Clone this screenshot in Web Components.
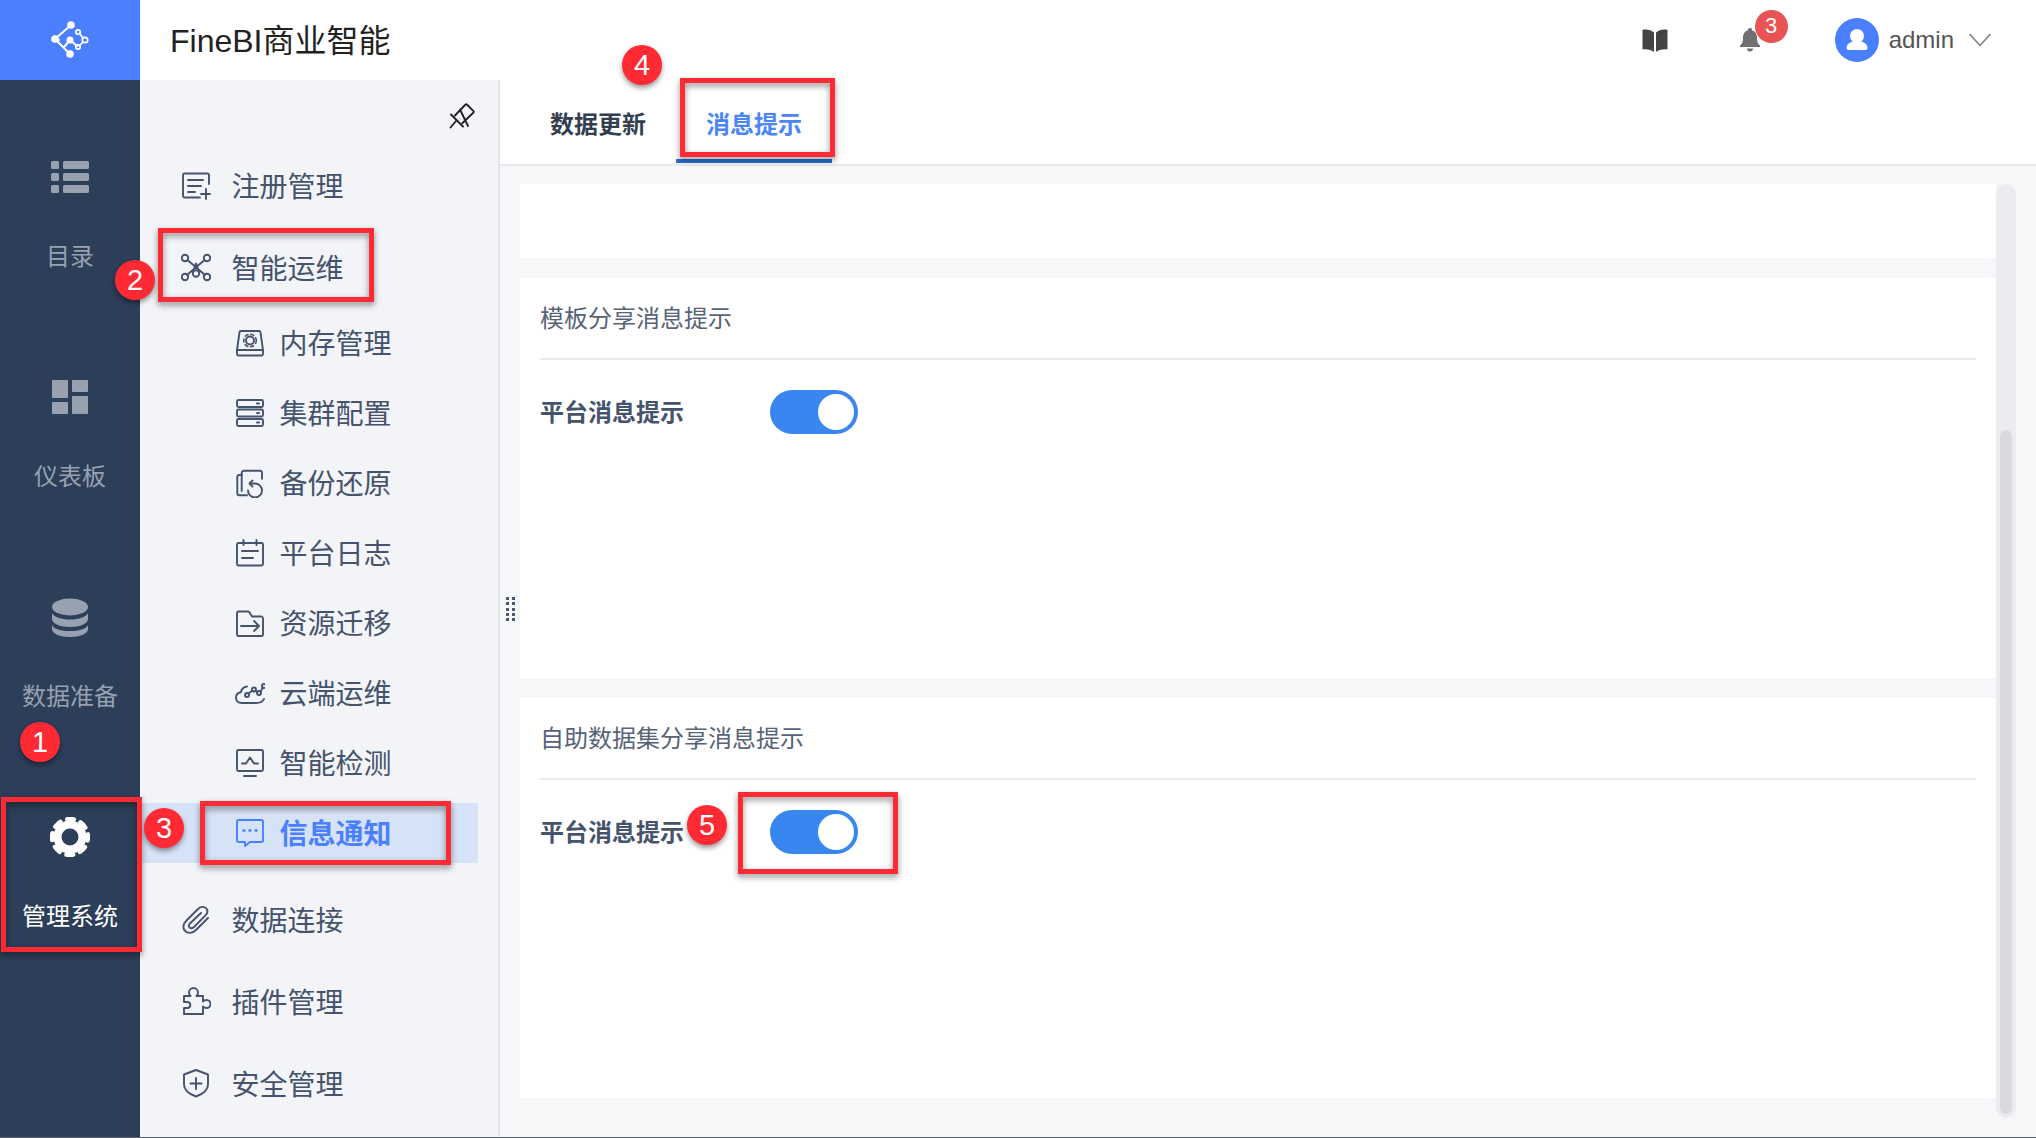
<!DOCTYPE html>
<html lang="zh-CN">
<head>
<meta charset="utf-8">
<title>FineBI</title>
<style>
    html, body { margin: 0; padding: 0; background: #fff; }
    body { font-family: "Liberation Sans", "Noto Sans CJK SC", sans-serif; }
</style>
</head>
<body>
<fb-app>
    <fb-rail slot="rail">
        <fb-rail-item icon="list">目录</fb-rail-item>
        <fb-rail-item icon="board">仪表板</fb-rail-item>
        <fb-rail-item icon="db">数据准备</fb-rail-item>
        <fb-rail-item icon="gear" active>管理系统</fb-rail-item>
    </fb-rail>
    <fb-topbar slot="top"></fb-topbar>
    <fb-sidebar slot="side">
        <fb-nav-item icon="register">注册管理</fb-nav-item>
        <fb-nav-item icon="ops">智能运维</fb-nav-item>
        <fb-nav-item icon="memory" child>内存管理</fb-nav-item>
        <fb-nav-item icon="cluster" child>集群配置</fb-nav-item>
        <fb-nav-item icon="backup" child>备份还原</fb-nav-item>
        <fb-nav-item icon="log" child>平台日志</fb-nav-item>
        <fb-nav-item icon="folder" child>资源迁移</fb-nav-item>
        <fb-nav-item icon="cloud" child>云端运维</fb-nav-item>
        <fb-nav-item icon="monitor" child>智能检测</fb-nav-item>
        <fb-nav-item icon="chat" child active>信息通知</fb-nav-item>
        <fb-nav-item icon="clip" class="after">数据连接</fb-nav-item>
        <fb-nav-item icon="puzzle">插件管理</fb-nav-item>
        <fb-nav-item icon="shield">安全管理</fb-nav-item>
    </fb-sidebar>
    <fb-main slot="main">
        <fb-card size="74"></fb-card>
        <fb-card title="模板分享消息提示" label="平台消息提示"></fb-card>
        <fb-card title="自助数据集分享消息提示" label="平台消息提示"></fb-card>
    </fb-main>

    <fb-mark slot="over" box="1 797 141 155"></fb-mark>
    <fb-mark slot="over" box="158 228 216 74"></fb-mark>
    <fb-mark slot="over" box="200 801 251 64"></fb-mark>
    <fb-mark slot="over" box="680 78 155 79"></fb-mark>
    <fb-mark slot="over" box="738 792 160 82"></fb-mark>
    <fb-badge slot="over" at="40 742">1</fb-badge>
    <fb-badge slot="over" at="135 280">2</fb-badge>
    <fb-badge slot="over" at="164 828">3</fb-badge>
    <fb-badge slot="over" at="642 65">4</fb-badge>
    <fb-badge slot="over" at="707 825">5</fb-badge>
</fb-app>

<script>
// icon shapes, each drawn on a box of its "size" (30 by default)
const ICONS = {
    register: `<path d="M28 14V5a1.5 1.5 0 0 0-1.5-1.5h-23A1.5 1.5 0 0 0 2 5v21a1.5 1.5 0 0 0 1.5 1.5H19"/><path d="M7 10h15M7 16h13M7 22h7M25 19v10M20 24h9"/>`,
    ops: `<circle cx="4" cy="6" r="3.2"/><circle cx="26" cy="6" r="3.2"/><circle cx="4" cy="25" r="3.2"/><circle cx="26" cy="25" r="3.2"/><circle cx="15" cy="21.5" r="3.2"/><path d="M6.5 8 24 23M23.5 8 6 23M15 11.5l-3.2 8M15 11.5l3.2 8"/>`,
    memory: `<path d="M6 3h18a1.5 1.5 0 0 1 1.5 1.3L28 22v4a1.5 1.5 0 0 1-1.5 1.5h-23A1.5 1.5 0 0 1 2 26v-4L4.5 4.3A1.5 1.5 0 0 1 6 3z"/><path d="M2.5 22h25"/><circle cx="15" cy="12.5" r="4"/><circle cx="15" cy="12.5" r="6.3" stroke-dasharray="3 2.95" stroke-width="1.6"/>`,
    cluster: `<rect x="2" y="2" width="26" height="7" rx="1.5"/><rect x="2" y="11.5" width="26" height="7" rx="1.5"/><rect x="2" y="21" width="26" height="7" rx="1.5"/><path d="M22 5.5h2M22 15h2M22 24.5h2"/>`,
    backup: `<path d="M6.7 23V5a2.3 2.3 0 0 1 2.3-2.3h16a2 2 0 0 1 2 2v6"/><path d="M6.7 7H4.3a2 2 0 0 0-2 2v16.3a2 2 0 0 0 2 2H12"/><path d="M15 15.5h5a7 7 0 1 1-7 7"/><path d="M17.5 12.5l-3 3 3 3"/>`,
    log: `<rect x="2" y="5" width="26" height="22.5" rx="1.5"/><path d="M8.5 2v5M21.5 2v5M7 13h16M7 20h11"/>`,
    folder: `<path d="M3.5 3.5H13a1.5 1.5 0 0 1 1.2.6L17 8.5h8.5A2 2 0 0 1 28 10.5v16a1.5 1.5 0 0 1-1.5 1.5h-23A1.5 1.5 0 0 1 2 26.5V5a1.5 1.5 0 0 1 1.5-1.5z"/><path d="M6 18h18M19 13l5 5-5 5"/>`,
    cloud: `<path d="M12 8.5C8.5 9 6.5 11 6 14c-3 .8-5 3-5 5.5C1 23 3.5 25 7 25h14c4 0 7-1.5 8-4"/><circle cx="12" cy="17" r="2"/><circle cx="19" cy="11.5" r="2"/><circle cx="24" cy="15" r="2"/><circle cx="29" cy="8" r="2"/><path d="M13.5 15.5l4-3M20.5 12.7l2 1.2M25.5 13.5l2.3-3.7"/>`,
    monitor: `<rect x="2" y="2" width="26" height="21" rx="1.5"/><path d="M9 28h12M7 15.5h4l4-6 4 6h4"/>`,
    chat: `<path d="M3.5 2h23A1.5 1.5 0 0 1 28 3.5v19a1.5 1.5 0 0 1-1.5 1.5H15l-5 4v-4H3.5A1.5 1.5 0 0 1 2 22.5v-19A1.5 1.5 0 0 1 3.5 2z"/><path d="M8.5 12.5h.8M14.6 12.5h.8M20.7 12.5h.8" stroke-width="2.6"/>`,
    clip: `<path d="M27 14 15 26c-3.5 3.500-8 3.700-10.800 1S2 20 5.500 16.500L17 5c2.500-2.500 6-2.800 8-.8s1.700 5-.8 7.500L13 23c-1.500 1.400-3.300 1.600-4.400.5s-.9-2.800.6-4.300L20 9"/>`,
    puzzle: `<path d="M3 10h6.500C8.500 9 8 8 8 6.500 8 4 10 2 12.500 2S17 4 17 6.500c0 1.500-.5 2.500-1.500 3.500H22v5.500c1-1 2-1.500 3.500-1.500C28 14 29.500 16 29.500 18S28 22 25.500 22c-1.500 0-2.500-.5-3.500-1.500V28H3v-6h3c2 0 3.300-1.200 3.300-3S8 16 6 16H3z"/>`,
    shield: `<path d="M15 2l12 4.5v10c0 5.500-5 9.500-12 12-7-2.500-12-6.500-12-12v-10z"/><path d="M15 10v11M9.5 15.5h11"/>`,
    pin: `<path d="M8 14.5 18.5 3.500a1 1 0 0 1 1.400 0l6.600 6.600a1 1 0 0 1 0 1.400L15.500 22M4 13.500 16 25.500M9 20 3.500 26.500M13 8.500 21 25"/>`,
    list: `<g fill="#98a1b0" stroke="none" transform="translate(0 3)"><rect x="1" y="1" width="8" height="8" rx="1.5"/><rect x="1" y="13" width="8" height="8" rx="1.5"/><rect x="1" y="25" width="8" height="8" rx="1.5"/><rect x="13" y="1" width="26" height="8" rx="1.5"/><rect x="13" y="13" width="26" height="8" rx="1.5"/><rect x="13" y="25" width="26" height="8" rx="1.5"/></g>`,
    board: `<g fill="#98a1b0" stroke="none" transform="translate(0 2)"><rect x="2" y="1" width="16" height="18" rx="1"/><rect x="22" y="1" width="16" height="12" rx="1"/><rect x="2" y="23" width="16" height="12" rx="1"/><rect x="22" y="17" width="16" height="18" rx="1"/></g>`,
    db: `<g fill="#98a1b0" stroke="none" transform="translate(0 2)"><ellipse cx="20" cy="8" rx="18" ry="8.5"/><path d="M2 14c2 4 9 6.500 18 6.500S36 18 38 14v6c0 4.500-8 8-18 8S2 24.500 2 20z"/><path d="M2 26c2 4 9 6 18 6s16-2 18-6v4c0 4.500-8 8-18 8S2 34.500 2 30z"/></g>`,
    gear: `<circle cx="20" cy="20" r="12.5" stroke="#fff" stroke-width="8"/><circle cx="20" cy="20" r="18" stroke="#fff" stroke-width="4.4" stroke-dasharray="7 7.137" stroke-dashoffset="3.5"/>`,
    book: `<g fill="#444" stroke="none"><path d="M14 6.500C11 4 6.500 3 2.500 4v19.500c4-.6 8.500 0 11.500 2.500z"/><path d="M16 6.500C19 4 23.500 3 27.500 4v19.500c-4-.6-8.500 0-11.500 2.500z"/></g>`,
    bell: `<g fill="#707070" stroke="none"><path d="M15 3a2 2 0 0 1 2 2.300c3.500 1 5 4 5 7.700 0 4 1 6 3 7.500V22H5v-1.500c2-1.500 3-3.500 3-7.500 0-3.700 1.500-6.700 5-7.700A2 2 0 0 1 15 3z"/><path d="M12 23.500h6a3 3 0 0 1-6 0z"/></g>`,
    chevron: `<path d="M1 5.500 11 16.500 21 5.500" stroke-width="1.6"/>`,
    logo: `<g stroke="#fff" stroke-width="2"><path d="M30 10 14 24l15 15M14 24l4 1M29 25l-6 7M29 25l7 6"/></g>
        <g fill="#fff" stroke="none"><circle cx="30" cy="10" r="3.8"/><circle cx="14" cy="24" r="3.8"/><circle cx="29" cy="25" r="3.5"/><circle cx="29" cy="39" r="3.8"/></g>
        <g stroke="#fff" stroke-width="1.7"><circle cx="37" cy="17" r="2.2"/><circle cx="44" cy="25" r="2.7"/><circle cx="37" cy="32" r="2.2"/><path d="M38.5 18.5l3.5 4.5M42 27l-3.5 3.5"/></g>`
};

class FbIcon extends HTMLElement {
    constructor() {
        super();
        this.attachShadow({ mode: "open" });
    }

    connectedCallback() {
        const size = this.getAttribute("size") || "30";
        const name = this.getAttribute("name");
        this.shadowRoot.innerHTML = `
        <style>
            :host { display: block; width: ${size}px; height: ${size}px; flex: none; }
            svg { display: block; fill: none; stroke: currentColor; stroke-width: 1.9; stroke-linecap: round; stroke-linejoin: round; }
        </style>
        <svg width="${size}" height="${size}" viewBox="0 0 ${size} ${size}">${ICONS[name] || ""}</svg>
        `;
    }
}

class FbApp extends HTMLElement {
    constructor() {
        super();
        this.attachShadow({ mode: "open" });
        this.shadowRoot.innerHTML = `
        <style>
            :host {
                display: grid;
                grid-template-columns: 140px 1fr;
                grid-template-rows: 80px 1057px 1px;
                width: 2036px;
                height: 1138px;
                position: relative;
                overflow: hidden;
            }
            .logo { background: #4a80ff; }
            .logo fb-icon { margin: 15px 0 0 41px; }
            .body { display: grid; grid-template-columns: 360px 1fr; min-width: 0; }
            .line { grid-column: 1 / 3; background: #5c6270; }
        </style>
        <div class="logo"><fb-icon name="logo" size="60"></fb-icon></div>
        <slot name="top"></slot>
        <slot name="rail"></slot>
        <div class="body">
            <slot name="side"></slot>
            <slot name="main"></slot>
        </div>
        <div class="line"></div>
        <slot name="over"></slot>
        `;
    }
}

class FbTopbar extends HTMLElement {
    constructor() {
        super();
        this.attachShadow({ mode: "open" });
        this.shadowRoot.innerHTML = `
        <style>
            :host {
                display: flex;
                align-items: center;
                height: 80px;
                padding: 0 45px 0 30px;
                background: #fff;
                box-sizing: border-box;
            }
            .title { font-size: 32px; color: #222; padding-bottom: 4px; }
            .right { margin-left: auto; display: flex; align-items: center; }
            .book { margin-top: 2px; }
            .bell { position: relative; margin-left: 65px; }
            .count {
                position: absolute;
                left: 20px;
                top: -15px;
                width: 33px;
                height: 33px;
                border-radius: 50%;
                background: #e85454;
                color: #fff;
                font-size: 22px;
                line-height: 32px;
                text-align: center;
            }
            .avatar {
                width: 44px;
                height: 44px;
                margin-left: 70px;
                border-radius: 50%;
                background: #4a80ff;
            }
            .avatar svg { display: block; }
            .name { margin-left: 10px; font-size: 24px; color: #555; }
            .chev { margin-left: 15px; color: #7d8288; }
        </style>
        <div class="title">FineBI商业智能</div>
        <div class="right">
            <fb-icon class="book" name="book"></fb-icon>
            <div class="bell"><fb-icon name="bell"></fb-icon><span class="count">3</span></div>
            <div class="avatar">
                <svg width="44" height="44" viewBox="0 0 44 44" fill="#fff"><circle cx="22" cy="18" r="7"/><path d="M11.5 30c0-4 4-7 10.500-7s10.500 3 10.500 7a2 2 0 0 1-2 2h-17a2 2 0 0 1-2-2z"/></svg>
            </div>
            <span class="name">admin</span>
            <fb-icon class="chev" name="chevron" size="22"></fb-icon>
        </div>
        `;
    }
}

class FbRail extends HTMLElement {
    constructor() {
        super();
        this.attachShadow({ mode: "open" });
        this.shadowRoot.innerHTML = `
        <style>
            :host {
                display: flex;
                flex-direction: column;
                padding-top: 77px;
                background: #2c3e58;
                box-sizing: border-box;
                grid-row: 2;
                grid-column: 1;
            }
        </style>
        <slot></slot>
        `;
    }
}

class FbRailItem extends HTMLElement {
    constructor() {
        super();
        this.attachShadow({ mode: "open" });
    }

    connectedCallback() {
        const icon = this.getAttribute("icon");
        this.shadowRoot.innerHTML = `
        <style>
            :host {
                display: flex;
                flex-direction: column;
                align-items: center;
                height: 220px;
                font-size: 24px;
                line-height: 34px;
                color: #98a1b0;
            }
            :host([active]) { color: #fff; }
            .label { margin-top: 42.5px; }
        </style>
        <fb-icon name="${icon}" size="40"></fb-icon>
        <div class="label"><slot></slot></div>
        `;
    }
}

class FbSidebar extends HTMLElement {
    constructor() {
        super();
        this.attachShadow({ mode: "open" });
        this.shadowRoot.innerHTML = `
        <style>
            :host {
                display: block;
                background: #f2f4f8;
                border-right: 2px solid #e4e6ec;
                box-sizing: border-box;
            }
            .pin { display: flex; justify-content: flex-end; height: 64px; padding: 21px 21px 0 0; box-sizing: border-box; color: #222; }
        </style>
        <div class="pin"><fb-icon name="pin"></fb-icon></div>
        <slot></slot>
        `;
    }
}

class FbNavItem extends HTMLElement {
    constructor() {
        super();
        this.attachShadow({ mode: "open" });
    }

    connectedCallback() {
        const icon = this.getAttribute("icon");
        this.shadowRoot.innerHTML = `
        <style>
            :host {
                display: flex;
                align-items: center;
                gap: 20.5px;
                height: 82px;
                padding-left: 41px;
                font-size: 28px;
                color: #45536c;
                box-sizing: border-box;
            }
            :host([child]) { height: 70px; padding-left: 95px; gap: 14.5px; }
            :host([active]) {
                height: 60px;
                margin: 5px 20px 5px 0;
                background: #d6e2f5;
                color: #4a80ff;
                font-weight: 700;
            }
            /* block margins of the active row and this one collapse */
            :host(.after) { margin-top: 15px; }
            .text { display: block; }
            :host([child]) .text { margin-top: -2px; }
        </style>
        <fb-icon name="${icon}"></fb-icon>
        <span class="text"><slot></slot></span>
        `;
    }
}

class FbMain extends HTMLElement {
    constructor() {
        super();
        this.attachShadow({ mode: "open" });
        this.shadowRoot.innerHTML = `
        <style>
            :host {
                display: flex;
                flex-direction: column;
                position: relative;
                background: #f6f7f9;
                min-width: 0;
            }
            .tabs {
                display: flex;
                height: 86px;
                padding-left: 20px;
                background: #fff;
                border-bottom: 2px solid #e8e9ee;
                box-sizing: border-box;
            }
            .tab {
                width: 156px;
                height: 83px;
                padding-top: 28px;
                font-size: 24px;
                line-height: 34px;
                font-weight: 700;
                text-align: center;
                color: #333f50;
                box-sizing: border-box;
            }
            .tab.on { color: #4a86f5; border-bottom: 4px solid #2a6fd0; }
            .scroll { display: flex; padding: 18px 20px 0 20px; }
            .cards { display: flex; flex-direction: column; gap: 20px; width: 1476px; }
            .track { width: 20px; height: 934px; background: #ebecf0; border-radius: 10px; position: relative; }
            .thumb { position: absolute; left: 4px; top: 246px; width: 12px; height: 684px; background: #d9dadf; border-radius: 6px; }
            .grip {
                position: absolute;
                left: 6px;
                top: 517px;
                display: grid;
                grid-template-columns: 3px 3px;
                row-gap: 2.3px;
                column-gap: 3px;
            }
            .grip i { width: 3px; height: 3px; background: #4a5870; }
        </style>
        <div class="tabs">
            <div class="tab">数据更新</div>
            <div class="tab on">消息提示</div>
        </div>
        <div class="scroll">
            <div class="cards"><slot></slot></div>
            <div class="track"><div class="thumb"></div></div>
        </div>
        <div class="grip"><i></i><i></i><i></i><i></i><i></i><i></i><i></i><i></i><i></i><i></i></div>
        `;
    }
}

class FbCard extends HTMLElement {
    constructor() {
        super();
        this.attachShadow({ mode: "open" });
    }

    connectedCallback() {
        const title = this.getAttribute("title");
        const label = this.getAttribute("label");
        const size = this.getAttribute("size") || "400";
        this.removeAttribute("title");
        this.shadowRoot.innerHTML = `
        <style>
            :host {
                display: block;
                height: ${size}px;
                padding: 0 20px;
                background: #fff;
                box-sizing: border-box;
            }
            .head {
                height: 82px;
                padding-top: 24px;
                font-size: 24px;
                line-height: 34px;
                color: #566378;
                border-bottom: 2px solid #e8e9ee;
                box-sizing: border-box;
            }
            .row { display: flex; align-items: center; margin-top: 30px; }
            .label { width: 230px; font-size: 24px; font-weight: 700; color: #45536c; padding-bottom: 4px; }
        </style>
        ${title ? `
        <div class="head">${title}</div>
        <div class="row"><span class="label">${label}</span><fb-toggle></fb-toggle></div>
        ` : ""}
        `;
    }
}

class FbToggle extends HTMLElement {
    constructor() {
        super();
        this.attachShadow({ mode: "open" });
        this.shadowRoot.innerHTML = `
        <style>
            :host {
                display: flex;
                justify-content: flex-end;
                align-items: center;
                width: 88px;
                height: 44px;
                padding-right: 4px;
                border-radius: 22px;
                background: #3a86f0;
                box-sizing: border-box;
            }
            i { width: 36px; height: 36px; border-radius: 50%; background: #fff; }
        </style>
        <i></i>
        `;
    }
}

class FbMark extends HTMLElement {
    constructor() {
        super();
        this.attachShadow({ mode: "open" });
    }

    connectedCallback() {
        const [x, y, w, h] = this.getAttribute("box").split(" ");
        this.shadowRoot.innerHTML = `
        <style>
            :host {
                position: absolute;
                left: ${x}px;
                top: ${y}px;
                width: ${w}px;
                height: ${h}px;
                border: 5px solid #ff2a33;
                box-sizing: border-box;
                filter: drop-shadow(0 3px 3px rgba(0,0,0,0.45));
            }
        </style>
        `;
    }
}

class FbBadge extends HTMLElement {
    constructor() {
        super();
        this.attachShadow({ mode: "open" });
    }

    connectedCallback() {
        const [x, y] = this.getAttribute("at").split(" ").map(Number);
        this.shadowRoot.innerHTML = `
        <style>
            :host {
                position: absolute;
                left: ${x - 20}px;
                top: ${y - 20}px;
                width: 40px;
                height: 40px;
                border-radius: 50%;
                background: #ff2a33;
                color: #fff;
                font-size: 29px;
                line-height: 40px;
                text-align: center;
                box-shadow: 0 3px 5px rgba(0,0,0,0.4);
            }
        </style>
        <slot></slot>
        `;
    }
}

customElements.define("fb-icon", FbIcon);
customElements.define("fb-app", FbApp);
customElements.define("fb-topbar", FbTopbar);
customElements.define("fb-rail", FbRail);
customElements.define("fb-rail-item", FbRailItem);
customElements.define("fb-sidebar", FbSidebar);
customElements.define("fb-nav-item", FbNavItem);
customElements.define("fb-main", FbMain);
customElements.define("fb-card", FbCard);
customElements.define("fb-toggle", FbToggle);
customElements.define("fb-mark", FbMark);
customElements.define("fb-badge", FbBadge);
</script>
</body>
</html>
